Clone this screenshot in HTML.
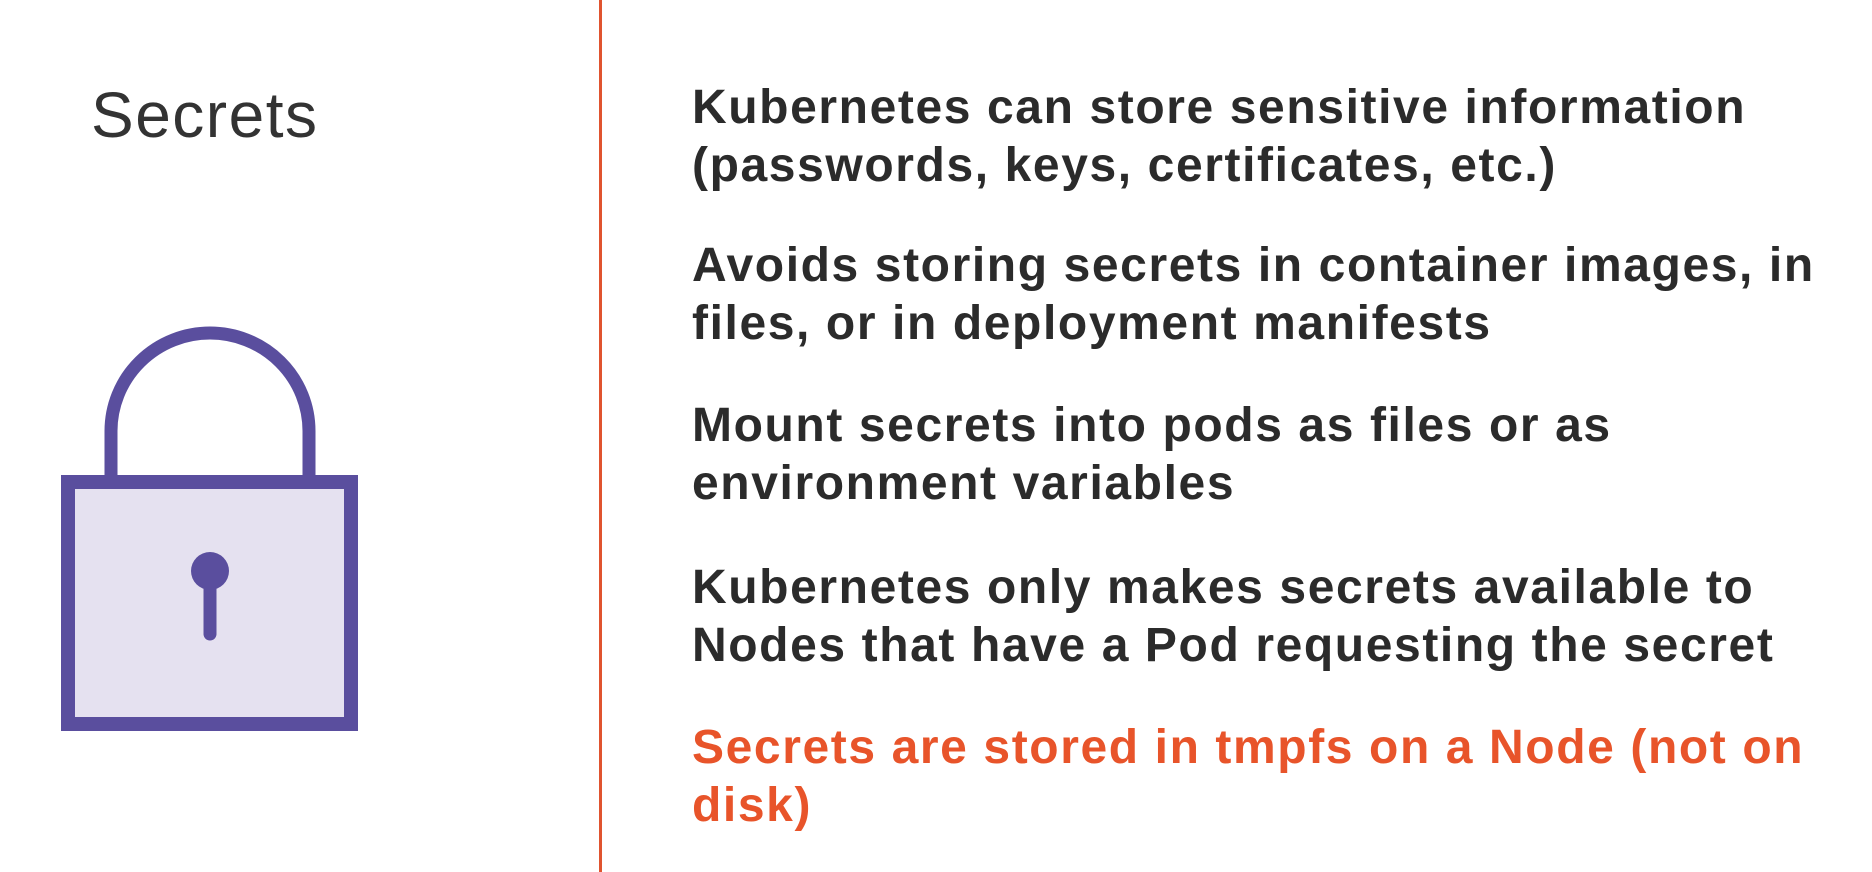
<!DOCTYPE html>
<html><head><meta charset="utf-8"><style>
html,body{margin:0;padding:0;background:#fff;width:1872px;height:872px;overflow:hidden;position:relative;font-family:"Liberation Sans",sans-serif}
.title{position:absolute;left:91px;top:80px;font-size:64px;color:#333;font-weight:300;line-height:70px;letter-spacing:1.5px}
.div{position:absolute;left:599px;top:0;width:3px;height:872px;background:#e0542f}
.p{position:absolute;left:692px;font-size:48px;font-weight:bold;color:#2b2b2b;line-height:58px;white-space:nowrap;letter-spacing:1.6px}
.o{color:#e8542a}
</style></head><body>
<div class="title">Secrets</div>
<div class="div"></div>
<svg style="position:absolute;left:0;top:0" width="600" height="872">
<path d="M111 482 V431 A99 98 0 0 1 309 431 V482" fill="none" stroke="#5a4e9e" stroke-width="13"/>
<rect x="68" y="482" width="283" height="242" fill="#e5e1f0" stroke="#5a4e9e" stroke-width="14"/>
<circle cx="210" cy="571" r="19" fill="#5a4e9e"/>
<line x1="210" y1="580" x2="210" y2="634" stroke="#5a4e9e" stroke-width="13" stroke-linecap="round"/>
</svg>
<div class="p" style="top:79px">Kubernetes can store sensitive information<br>(passwords, keys, certificates, etc.)</div>
<div class="p" style="top:237px">Avoids storing secrets in container images, in<br>files, or in deployment manifests</div>
<div class="p" style="top:397px">Mount secrets into pods as files or as<br>environment variables</div>
<div class="p" style="top:559px">Kubernetes only makes secrets available to<br>Nodes that have a Pod requesting the secret</div>
<div class="p o" style="top:719px">Secrets are stored in tmpfs on a Node (not on<br>disk)</div>
</body></html>
